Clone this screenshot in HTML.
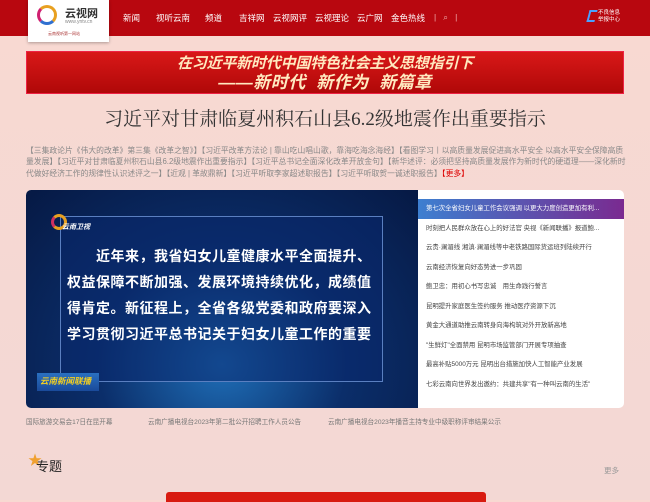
<!DOCTYPE html>
<html><head><meta charset="utf-8"><style>
*{margin:0;padding:0;box-sizing:border-box}
body{width:650px;height:500px;overflow:hidden;background:linear-gradient(#f8d9d2,#f3d8d4);font-family:"Liberation Sans","Noto Sans CJK SC",sans-serif;position:relative}
.hdr{position:absolute;left:0;top:0;width:650px;height:36px;background:#b8070f}
.logo{position:absolute;left:28px;top:0;width:81px;height:42px;background:#fff;box-shadow:0 1px 3px rgba(0,0,0,.3)}
.nav{position:absolute;top:12px;color:#fff;font-size:8.5px}
.ban{position:absolute;left:26px;top:51px;width:598px;height:43px;background:linear-gradient(#d81818,#b00808);border:1px solid #e24;color:#ffe9c0;font-weight:bold;text-align:center;font-style:italic}
.t{position:absolute;left:0;width:650px;top:108px;text-align:center;font-size:19px;line-height:24px;color:#333;font-family:"Liberation Serif","Noto Serif CJK SC",serif}
.tags{position:absolute;left:26px;top:145px;width:600px;font-size:7.8px;line-height:11.3px;color:#888}
.box{position:absolute;left:26px;top:190px;width:598px;height:218px;background:#fff;border-radius:5px;overflow:hidden}
.vid{position:absolute;left:0;top:0;width:392px;height:218px;background:radial-gradient(ellipse at 50% 80%,#1f6fb8 0%,#0b2e6a 45%,#061944 100%)}
.frame{position:absolute;left:34px;top:26px;width:323px;height:166px;border:1px solid #5a7fc0;background:rgba(10,40,110,.55)}
.vt{position:absolute;left:41px;top:53px;width:312px;color:#fff;font-weight:bold;font-size:14px;line-height:26px;letter-spacing:.5px}
.list{position:absolute;left:392px;top:0;width:206px}
.list div{height:19.5px;line-height:19.5px;font-size:6.4px;color:#444;padding-left:8px;white-space:nowrap;overflow:hidden}
.list .a{background:linear-gradient(90deg,#3d7fd0,#7a2a90);color:#fff;margin-top:9px}
.cap{position:absolute;top:416px;font-size:6.6px;color:#777}
</style></head><body>
<div class="hdr"></div>
<div class="logo"><div style="position:absolute;left:9px;top:5px;width:20px;height:20px;border-radius:50%;border:3px solid #e8a020;border-left-color:#d02070;border-bottom-color:#3070d0"></div><div style="position:absolute;left:37px;top:5px;font-size:11px;font-weight:bold;color:#333">云视网</div><div style="position:absolute;left:37px;top:19px;font-size:5px;color:#888">www.yntv.cn</div><div style="position:absolute;left:20px;top:31px;font-size:4px;color:#a33">云南视听第一网站</div></div>
<div class="nav" style="left:123px">新闻</div><div class="nav" style="left:156px">视听云南</div><div class="nav" style="left:205px">频道</div><div class="nav" style="left:239px">吉祥网</div><div class="nav" style="left:273px">云视网评</div><div class="nav" style="left:315px">云视理论</div><div class="nav" style="left:357px">云广网</div><div class="nav" style="left:391px">金色热线</div>
<div class="nav" style="left:434px;color:#eaa">|&nbsp;&nbsp;&nbsp;⌕&nbsp;&nbsp;&nbsp;|</div>
<div style="position:absolute;left:588px;top:10px;width:8px;height:12px;border:2px solid #4aa0ff;border-right:none;transform:skewX(-15deg)"></div>
<div class="nav" style="left:598px;top:10px;font-size:5.5px;line-height:7px">不良信息<br>举报中心</div>
<div class="ban"><div style="font-size:15px;line-height:18px;margin-top:3px;letter-spacing:-.2px">在习近平新时代中国特色社会主义思想指引下</div><div style="font-size:17px;line-height:19px;letter-spacing:.5px">——新时代&nbsp; 新作为&nbsp; 新篇章</div></div>
<div class="t">习近平对甘肃临夏州积石山县6.2级地震作出重要指示</div>
<div class="tags">【三集政论片《伟大的改革》第三集《改革之智》】【习近平改革方法论 | 靠山吃山唱山歌，靠海吃海念海经】【看图学习丨以高质量发展促进高水平安全 以高水平安全保障高质量发展】【习近平对甘肃临夏州积石山县6.2级地震作出重要指示】【习近平总书记全面深化改革开放金句】【新华述评：必须把坚持高质量发展作为新时代的硬道理——深化新时代做好经济工作的规律性认识述评之一】【近观 | 革故鼎新】【习近平听取李家超述职报告】【习近平听取贺一诚述职报告】<span style="color:#d00">【更多】</span></div>
<div class="box">
<div class="vid"><div class="frame"></div>
<div style="position:absolute;left:25px;top:24px;width:16px;height:16px;border-radius:50%;border:3px solid #e8a020;border-left-color:#d03060"></div><div style="position:absolute;left:36px;top:32px;color:#fff;font-size:7px;font-style:italic;font-weight:bold">云南卫视</div>
<div class="vt"><span style="display:inline-block;width:29px"></span>近年来，我省妇女儿童健康水平全面提升、权益保障不断加强、发展环境持续优化，成绩值得肯定。新征程上，全省各级党委和政府要深入学习贯彻习近平总书记关于妇女儿童工作的重要</div>
<div style="position:absolute;left:11px;top:183px;width:62px;height:18px;background:linear-gradient(#2a70c0,#1a4a9a);color:#f5d020;font-size:8.5px;font-weight:bold;padding:2px 3px;font-style:italic">云南新闻联播</div>
</div>
<div class="list"><div class="a">第七次全省妇女儿童工作会议强调 以更大力度创造更加有利...</div><div>时刻把人民群众放在心上的好法官 央视《新闻联播》报道鲍...</div><div>云贵·澜湄线 湘滇·澜湄线等中老铁路国际货运班列陆续开行</div><div>云南经济恢复向好态势进一步巩固</div><div>鲍卫忠：用初心书写忠诚　用生命践行誓言</div><div>昆明提升家庭医生签约服务 推动医疗资源下沉</div><div>黄金大通道助推云南转身向海构筑对外开放新高地</div><div>"生鲜灯"全面禁用 昆明市场监管部门开展专项抽查</div><div>最高补贴5000万元 昆明出台措施加快人工智能产业发展</div><div>七彩云南向世界发出邀约：共建共享"有一种叫云南的生活"</div></div>
</div>
<div class="cap" style="left:26px">国际旅游交易会17日在昆开幕</div><div class="cap" style="left:148px">云南广播电视台2023年第二批公开招聘工作人员公告</div><div class="cap" style="left:328px">云南广播电视台2023年播音主持专业中级职称评审结果公示</div>
<div style="position:absolute;left:28px;top:450px;color:#f0a030;font-size:14px">★</div>
<div style="position:absolute;left:36px;top:456px;font-size:13px;color:#222">专题</div>
<div style="position:absolute;left:604px;top:465px;font-size:7.5px;color:#999">更多</div>
<div style="position:absolute;left:166px;top:492px;width:320px;height:10px;background:#d81a10;border-radius:3px 3px 0 0"></div>
</body></html>
